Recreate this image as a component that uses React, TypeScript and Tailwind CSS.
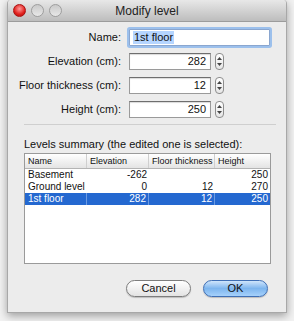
import React from "react";

const font = { fontFamily: '"Liberation Sans", Arial, sans-serif' };

const Stepper = () => (
  <div className="ml-[4px] flex h-[17px] w-[9px] flex-col items-center justify-center gap-[3px] rounded-[4px] border border-[#8d8d8d] bg-gradient-to-b from-white to-[#e6e6e6]">
    <svg width="5" height="3" viewBox="0 0 5 3">
      <path d="M0 3 L2.5 0 L5 3 Z" fill="#444" />
    </svg>
    <svg width="5" height="3" viewBox="0 0 5 3">
      <path d="M0 0 L2.5 3 L5 0 Z" fill="#444" />
    </svg>
  </div>
);

const NumberRow = ({ label, value }: { label: string; value: string }) => (
  <div className="flex h-[17px] items-center">
    <div className="w-[114px] whitespace-nowrap pr-[1px] text-right text-[11px] text-[#111]">{label}</div>
    <div className="ml-[7px] flex h-[17px] w-[82px] items-center justify-end border border-[#9a9a9a] border-t-[#6e6e6e] bg-white pr-[4px] text-[11px] text-[#111] shadow-[inset_0_1px_1px_rgba(0,0,0,0.15)]">
      {value}
    </div>
    <Stepper />
  </div>
);

const rows = [
  { name: "Basement", elevation: "-262", thickness: "", height: "250" },
  { name: "Ground level", elevation: "0", thickness: "12", height: "270" },
  { name: "1st floor", elevation: "282", thickness: "12", height: "250", selected: true },
];

const cell = "flex items-center whitespace-nowrap overflow-hidden";

export default function App() {
  return (
    <div className="h-[321px] w-[294px] bg-[#f2f2f2] pl-[7px]" style={font}>
      <div className="flex h-[313px] w-[280px] flex-col overflow-hidden rounded-t-[4px] border border-t-0 border-[#a8a8a8] bg-[#ececec] shadow-[0_3px_8px_rgba(0,0,0,0.35)]">
        {/* title bar */}
        <div className="relative flex h-[22px] items-center justify-center border-b border-[#9c9c9c] bg-gradient-to-b from-[#e8e8e8] to-[#bdbdbd]">
          <div className="absolute left-[5px] top-[4px] flex gap-[5px]">
            <div className="h-[13px] w-[13px] rounded-full border border-[#a11] bg-[radial-gradient(circle_at_50%_35%,#ff9a9a,#e0201c_60%,#a80e0e)]" />
            <div className="h-[13px] w-[13px] rounded-full border border-[#9d9d9d] bg-gradient-to-b from-[#c9c9c9] to-[#e8e8e8]" />
            <div className="h-[13px] w-[13px] rounded-full border border-[#9d9d9d] bg-gradient-to-b from-[#c9c9c9] to-[#e8e8e8]" />
          </div>
          <span className="text-[12px] text-[#222]">Modify level</span>
        </div>

        {/* form */}
        <div className="flex flex-col pt-[7px]">
          <div className="flex h-[17px] items-center">
            <div className="w-[114px] pr-[1px] text-right text-[11px] text-[#111]">Name:</div>
            <div className="ml-[7px] flex h-[17px] w-[141px] items-center rounded-[1px] border border-[#8aa6cf] bg-white pl-[3px] text-[11px] text-[#111] shadow-[0_0_0_2px_#9cc0ec]">
              <span className="bg-[#b5d5ff] px-[1px] leading-[13px]">1st floor</span>
            </div>
          </div>
          <div className="mt-[7px] flex flex-col gap-[7px]">
            <NumberRow label="Elevation (cm):" value="282" />
            <NumberRow label="Floor thickness (cm):" value="12" />
            <NumberRow label="Height (cm):" value="250" />
          </div>
        </div>

        <div className="ml-[16px] mr-[10px] mt-[6px] h-px bg-[#cfcfcf]" />

        <div className="ml-[16px] mt-[12px] whitespace-nowrap text-[11px] leading-[14px] text-[#111]">
          Levels summary (the edited one is selected):
        </div>

        {/* table */}
        <div className="ml-[16px] mt-[2px] h-[111px] w-[247px] border border-[#9a9a9a] bg-white text-[10px] leading-[12px] text-[#111]">
          <div className="grid h-[15px] grid-cols-[62px_62px_66px_1fr] border-b border-[#b4b4b4] bg-gradient-to-b from-white to-[#e4e4e4] text-[9px]">
            <div className={`${cell} border-r border-[#cfcfcf] pl-[3px]`}>Name</div>
            <div className={`${cell} border-r border-[#cfcfcf] pl-[3px]`}>Elevation</div>
            <div className={`${cell} border-r border-[#cfcfcf] pl-[3px]`}>Floor thickness</div>
            <div className={`${cell} pl-[3px]`}>Height</div>
          </div>
          {rows.map((r) => (
            <div
              key={r.name}
              className={
                r.selected
                  ? "grid h-[12px] grid-cols-[62px_62px_66px_1fr] bg-[#2468d0] text-white"
                  : "grid h-[12px] grid-cols-[62px_62px_66px_1fr]"
              }
            >
              <div className={r.selected ? `${cell} border-r border-[#6c9be2] pl-[3px]` : `${cell} pl-[3px]`}>{r.name}</div>
              <div className={r.selected ? `${cell} justify-end border-r border-[#6c9be2] pr-[2px]` : `${cell} justify-end pr-[2px]`}>{r.elevation}</div>
              <div className={r.selected ? `${cell} justify-end border-r border-[#6c9be2] pr-[2px]` : `${cell} justify-end pr-[2px]`}>{r.thickness}</div>
              <div className={`${cell} justify-end pr-[2px]`}>{r.height}</div>
            </div>
          ))}
        </div>

        {/* buttons */}
        <div className="ml-[118px] mt-[16px] flex gap-[12px]">
          <button className="flex h-[17px] w-[65px] items-center justify-center rounded-full border border-[#7d7d7d] bg-gradient-to-b from-white to-[#e3e3e3] text-[11px] text-[#111] shadow-[0_1px_1px_rgba(0,0,0,0.2)]">
            Cancel
          </button>
          <button className="flex h-[17px] w-[65px] items-center justify-center rounded-full border border-[#3f6fb5] bg-gradient-to-b from-[#cfe5fb] via-[#7db5ee] to-[#a6d1fb] text-[11px] text-[#111] shadow-[0_1px_1px_rgba(0,0,0,0.2)]">
            OK
          </button>
        </div>
      </div>
    </div>
  );
}
